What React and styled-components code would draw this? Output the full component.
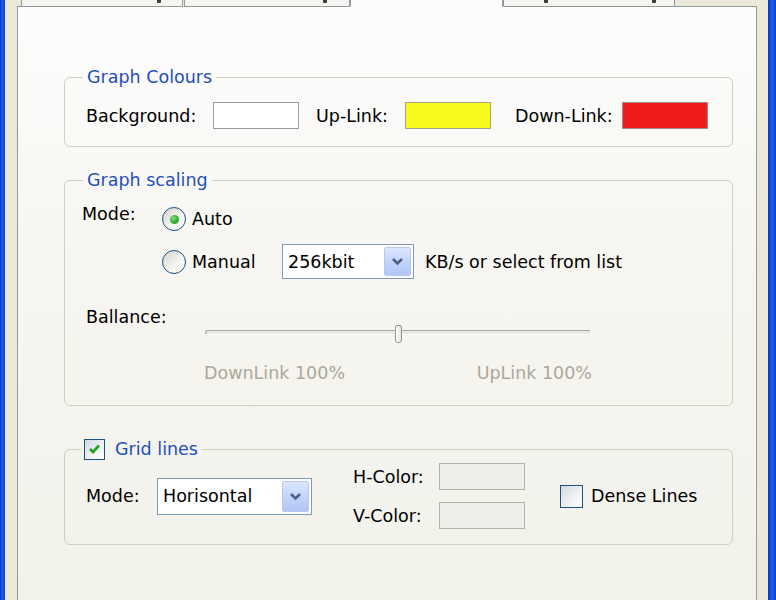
import React from 'react';
import styled, { createGlobalStyle } from 'styled-components';

const GlobalStyle = createGlobalStyle`
  html, body {
    margin: 0;
    padding: 0;
  }
  body {
    width: 776px;
    height: 600px;
    overflow: hidden;
    background: #ece9d8;
    font-family: "DejaVu Sans", Verdana, sans-serif;
  }
`;

const Frame = styled.div`
  display: flex;
  width: 776px;
  height: 600px;
  overflow: hidden;
  background: #ece9d8;
  font-size: 17.5px;
  color: #000;
`;

const WindowEdge = styled.div`
  flex: none;
  width: ${p => p.$w}px;
  background: linear-gradient(90deg, #0836c8, #1f5ee8 55%, #0a3ed6);
`;

const Dialog = styled.div`
  flex: 1;
  display: flex;
  flex-direction: column;
  padding: 0 11px 0 12px;
  min-width: 0;
`;

const TabStrip = styled.div`
  display: flex;
  height: 7px;
  flex: none;
`;

const TabGap = styled.div`
  flex: ${p => (p.$grow ? 1 : 'none')};
  width: ${p => p.$w || 0}px;
  border-bottom: 1px solid #919b9c;
`;

const Tab = styled.div`
  flex: none;
  box-sizing: border-box;
  width: ${p => p.$w}px;
  display: flex;
  align-items: flex-start;
  border-left: 1px solid #919b9c;
  border-right: 1px solid #919b9c;
  border-bottom: 1px solid ${p => (p.$active ? 'transparent' : '#919b9c')};
  background: ${p => (p.$active ? '#fcfcfe' : '#f4f4f0')};
  margin-right: ${p => p.$mr || 0}px;
`;

const TabMark = styled.span`
  width: 4px;
  height: 3px;
  margin-left: ${p => p.$at}px;
  background: #3a3a3a;
  border-radius: 0 0 1px 1px;
`;

const Panel = styled.div`
  flex: 1;
  border: 1px solid #919b9c;
  border-top: none;
  border-bottom: none;
  background: linear-gradient(180deg, #fdfdfd 0%, #f7f6f2 40%, #f2f1ea 100%);
  padding: 59px 23px 0 46px;
`;

const Group = styled.fieldset`
  margin: ${p => p.$mt || 0}px 0 0;
  padding: 0;
  min-width: 0;
  border: 1px solid #d0d0bf;
  border-radius: 6px;
`;

const Legend = styled.legend`
  display: flex;
  align-items: center;
  gap: 10px;
  height: 22px;
  line-height: 22px;
  margin-left: ${p => p.$ml}px;
  padding: 0 ${p => p.$px}px;
  color: #1f4fbb;
`;

const Body = styled.div`
  padding: ${p => p.$pad};
`;

const Row = styled.div`
  display: flex;
  align-items: center;
`;

const Label = styled.span`
  flex: none;
  width: ${p => (p.$w ? `${p.$w}px` : 'auto')};
  line-height: 22px;
  white-space: nowrap;
  color: ${p => (p.$disabled ? '#aca899' : '#000')};
`;

const Swatch = styled.span`
  flex: none;
  box-sizing: border-box;
  width: 86px;
  height: 27px;
  border: 1px solid ${p => p.$edge || '#a0a0a0'};
  background: ${p => p.$fill};
`;

const ModeGrid = styled.div`
  display: grid;
  grid-template-columns: 80px auto;
  row-gap: 13px;
  align-items: center;
`;

const ModeLabel = styled(Label)`
  align-self: start;
  margin-top: -4px;
`;

const Option = styled.label`
  flex: none;
  display: flex;
  align-items: center;
  gap: 6px;
  width: ${p => (p.$w ? `${p.$w}px` : 'auto')};
  line-height: 22px;
`;

const RadioDot = styled.span`
  flex: none;
  box-sizing: border-box;
  width: 24px;
  height: 24px;
  border-radius: 50%;
  border: 1px solid #1c5180;
  background: linear-gradient(135deg, #d6d5ce 0%, #f2f2ee 55%, #ffffff 100%);
  display: flex;
  align-items: center;
  justify-content: center;

  &::after {
    content: '';
    width: 9px;
    height: 9px;
    border-radius: 50%;
    background: radial-gradient(circle at 35% 35%, #7fe07a, #2fa82c 60%, #1f8a1c);
    display: ${p => (p.$on ? 'block' : 'none')};
  }
`;

const Box = styled.span`
  flex: none;
  box-sizing: border-box;
  width: ${p => p.$size}px;
  height: ${p => p.$size}px;
  border: 1px solid #1c5180;
  background: linear-gradient(135deg, #d3d8e0 0%, #eef0f2 55%, #ffffff 100%);
  display: flex;
  align-items: center;
  justify-content: center;
`;

const Combo = styled.div`
  flex: none;
  box-sizing: border-box;
  display: flex;
  align-items: center;
  width: ${p => p.$w}px;
  height: ${p => p.$h}px;
  border: 1px solid #7f9db9;
  background: #fff;
  padding: 0 2px 0 5px;
`;

const ComboText = styled.span`
  flex: 1;
  line-height: 22px;
  white-space: nowrap;
`;

const ComboButton = styled.span`
  flex: none;
  box-sizing: border-box;
  width: 27px;
  height: calc(100% - 4px);
  border: 1px solid #b7c8f2;
  border-radius: 2px;
  background: linear-gradient(180deg, #dde7fd 0%, #c3d4fb 50%, #b2c6f5 100%);
  display: flex;
  align-items: center;
  justify-content: center;
`;

const Hint = styled.span`
  margin-left: 11px;
  line-height: 22px;
  white-space: nowrap;
`;

const SliderLabel = styled(Label)`
  display: block;
  margin: 27px 0 0 4px;
`;

const SliderTrack = styled.div`
  position: relative;
  width: 385px;
  height: 19px;
  margin: -3px 0 0 123px;

  &::before {
    content: '';
    position: absolute;
    left: 0;
    right: 0;
    top: 5px;
    height: 3px;
    border-top: 1px solid #a5a49d;
    border-left: 1px solid #a5a49d;
    border-bottom: 1px solid #ffffff;
    border-radius: 3px 0 0 3px;
    background: #e9e8e1;
  }
`;

const Thumb = styled.span`
  position: absolute;
  top: 0;
  width: 7px;
  height: 18px;
  margin-left: -3px;
  box-sizing: border-box;
  border: 1px solid #98978f;
  border-radius: 2px 2px 3px 3px;
  background: linear-gradient(90deg, #ffffff, #e4e3dc);
`;

const Scale = styled.div`
  display: flex;
  justify-content: space-between;
  width: 388px;
  margin: 18px 0 0 122px;
`;

const ColorGrid = styled.div`
  display: grid;
  grid-template-columns: 86px 86px;
  row-gap: 12px;
  align-items: center;
  margin-left: 41px;
`;

const Chevron = () => (
  <svg width="13" height="9" viewBox="0 0 13 9">
    <path d="M2 2 L6.5 6.5 L11 2" fill="none" stroke="#4d6185" strokeWidth="2.6" />
  </svg>
);

const Tick = () => (
  <svg width="13" height="12" viewBox="0 0 13 12">
    <path d="M2 6 L5 9 L11 2.5" fill="none" stroke="#21a121" strokeWidth="2.6" />
  </svg>
);

export default function App() {
  return (
    <>
      <GlobalStyle />
      <Frame>
        <WindowEdge $w={5} />
        <Dialog>
          <TabStrip>
            <TabGap $w={4} />
            <Tab $w={162} $mr={1}>
              <TabMark $at={135} />
            </Tab>
            <Tab $w={166}>
              <TabMark $at={138} />
            </Tab>
            <Tab $w={153} $active />
            <Tab $w={172}>
              <TabMark $at={40} />
              <TabMark $at={104} />
            </Tab>
            <TabGap $grow />
          </TabStrip>
          <Panel>
            <Group>
              <Legend $ml={18} $px={4}>Graph Colours</Legend>
              <Body $pad="14px 21px 17px">
                <Row>
                  <Label $w={127}>Background:</Label>
                  <Swatch $fill="#ffffff" $edge="#9c9c9c" />
                  <Label $w={89} style={{ marginLeft: 17 }}>Up-Link:</Label>
                  <Swatch $fill="#f9f91c" $edge="#a3a38a" />
                  <Label $w={107} style={{ marginLeft: 24 }}>Down-Link:</Label>
                  <Swatch $fill="#f21b1b" $edge="#a88a8a" />
                </Row>
              </Body>
            </Group>

            <Group $mt={22}>
              <Legend $ml={18} $px={4}>Graph scaling</Legend>
              <Body $pad="16px 17px 21px">
                <ModeGrid>
                  <ModeLabel>Mode:</ModeLabel>
                  <Option>
                    <RadioDot $on />
                    Auto
                  </Option>
                  <span />
                  <Row>
                    <Option $w={120}>
                      <RadioDot />
                      Manual
                    </Option>
                    <Combo $w={132} $h={35}>
                      <ComboText>256kbit</ComboText>
                      <ComboButton>
                        <Chevron />
                      </ComboButton>
                    </Combo>
                    <Hint>KB/s or select from list</Hint>
                  </Row>
                </ModeGrid>
                <SliderLabel>Ballance:</SliderLabel>
                <SliderTrack>
                  <Thumb style={{ left: '50%' }} />
                </SliderTrack>
                <Scale>
                  <Label $disabled>DownLink 100%</Label>
                  <Label $disabled>UpLink 100%</Label>
                </Scale>
              </Body>
            </Group>

            <Group $mt={32}>
              <Legend $ml={16} $px={3}>
                <Box $size={21}>
                  <Tick />
                </Box>
                Grid lines
              </Legend>
              <Body $pad="3px 21px 15px">
                <Row>
                  <Label $w={71}>Mode:</Label>
                  <Combo $w={155} $h={37}>
                    <ComboText>Horisontal</ComboText>
                    <ComboButton>
                      <Chevron />
                    </ComboButton>
                  </Combo>
                  <ColorGrid>
                    <Label>H-Color:</Label>
                    <Swatch $fill="#efeee9" $edge="#b3b2ab" />
                    <Label>V-Color:</Label>
                    <Swatch $fill="#efeee9" $edge="#b3b2ab" />
                  </ColorGrid>
                  <Option style={{ marginLeft: 35, gap: 8 }}>
                    <Box $size={23} />
                    Dense Lines
                  </Option>
                </Row>
              </Body>
            </Group>
          </Panel>
        </Dialog>
        <WindowEdge $w={8} />
      </Frame>
    </>
  );
}
